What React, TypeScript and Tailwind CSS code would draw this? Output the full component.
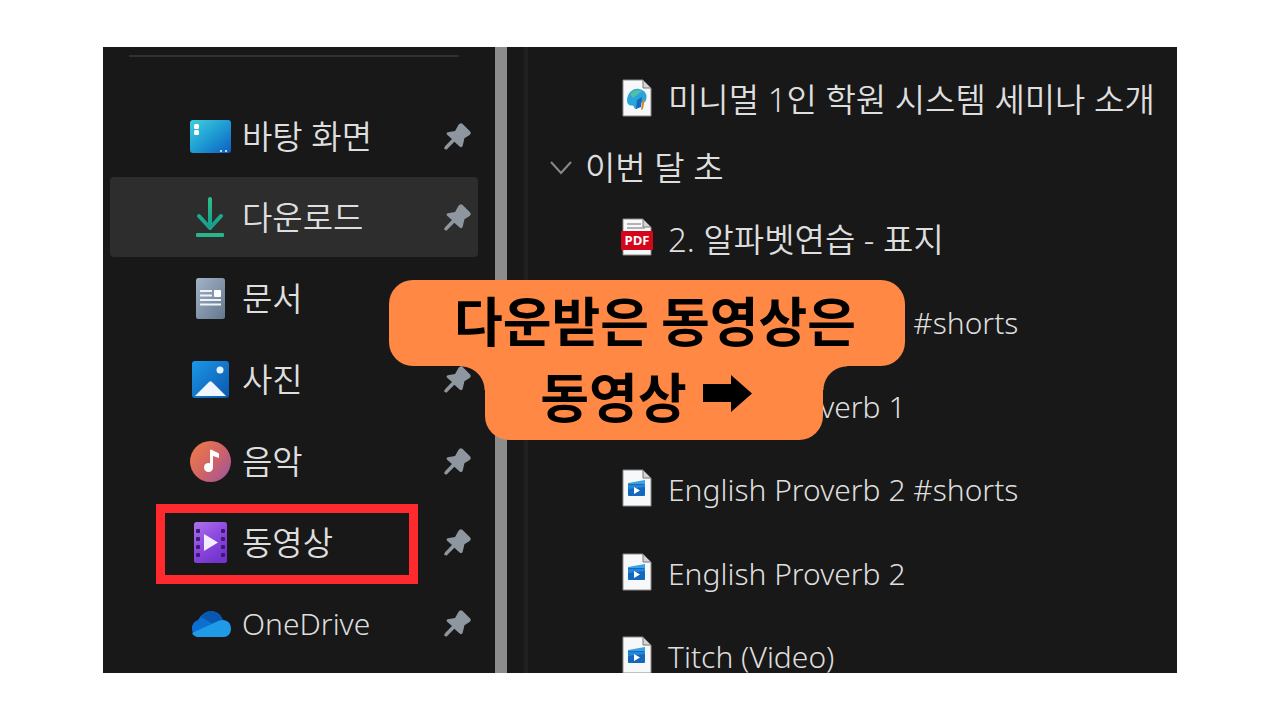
import type { ReactNode } from "react";
import { clsx } from "clsx";

type Place = {
  label: string;
  icon: ReactNode;
  latin?: boolean;
  selected?: boolean;
  marked?: boolean;
};

type FileItem = {
  name: string;
  icon: ReactNode;
  latin?: boolean;
};

function DesktopIcon() {
  return (
    <svg viewBox="0 0 41 33" className="w-[41px] h-[33px] shrink-0">
      <defs>
        <linearGradient id="desk" x1="0" y1="0" x2="1" y2="1">
          <stop offset="0" stopColor="#3fd0dc" />
          <stop offset="0.5" stopColor="#1f9cd4" />
          <stop offset="1" stopColor="#0b5fc0" />
        </linearGradient>
      </defs>
      <rect width="41" height="33" rx="3" fill="url(#desk)" />
      <rect x="4" y="4" width="5" height="5" rx="1.5" fill="#fff" />
      <rect x="4" y="10" width="5" height="5" rx="1.5" fill="#fff" />
      <rect x="30" y="30" width="2" height="2" fill="#b9dcf5" />
      <rect x="35" y="30" width="2" height="2" fill="#b9dcf5" />
    </svg>
  );
}

function DownloadIcon() {
  return (
    <svg viewBox="0 0 30 41" className="w-[30px] h-[41px]" fill="none">
      <defs>
        <linearGradient id="down" x1="0" y1="0" x2="0" y2="41" gradientUnits="userSpaceOnUse">
          <stop offset="0" stopColor="#2fc08c" />
          <stop offset="0.7" stopColor="#15a08c" />
          <stop offset="1" stopColor="#2bb58c" />
        </linearGradient>
      </defs>
      <path d="M15 2V29M4 19L15 31L26 19" stroke="url(#down)" strokeWidth="4" strokeLinecap="round" strokeLinejoin="round" />
      <rect x="1" y="36" width="28" height="4" rx="1" fill="#27b58b" />
    </svg>
  );
}

function DocumentIcon() {
  return (
    <svg viewBox="0 0 29 41" className="w-[29px] h-[41px]">
      <defs>
        <linearGradient id="doc" x1="0" y1="0" x2="1" y2="1">
          <stop offset="0" stopColor="#a3b3c6" />
          <stop offset="1" stopColor="#65788f" />
        </linearGradient>
      </defs>
      <rect width="29" height="41" rx="2.5" fill="url(#doc)" />
      <path d="M4 13H16M4 17.5H16M4 22H25M4 26.5H25" stroke="#eef3f9" strokeWidth="2" />
      <rect x="18" y="12" width="7" height="7" rx="1" fill="#fff" />
    </svg>
  );
}

function PictureIcon() {
  return (
    <svg viewBox="0 0 37 37" className="w-[37px] h-[37px]">
      <defs>
        <linearGradient id="pic" x1="0" y1="0" x2="1" y2="1">
          <stop offset="0" stopColor="#1d97e8" />
          <stop offset="1" stopColor="#0a57ac" />
        </linearGradient>
      </defs>
      <rect width="37" height="37" rx="3" fill="url(#pic)" />
      <path d="M3 35L17 21Q18.500 19.500 20 21L34 35Z" fill="#f0f6fd" />
      <circle cx="28" cy="9" r="3.500" fill="#e6f3fd" />
    </svg>
  );
}

function MusicIcon() {
  return (
    <svg viewBox="0 0 41 41" className="w-[41px] h-[41px] shrink-0">
      <defs>
        <linearGradient id="music" x1="0" y1="0.1" x2="1" y2="0.9">
          <stop offset="0" stopColor="#ee7b49" />
          <stop offset="0.55" stopColor="#cf6267" />
          <stop offset="1" stopColor="#9a579f" />
        </linearGradient>
      </defs>
      <circle cx="20.500" cy="20.500" r="20.500" fill="url(#music)" />
      <circle cx="18.500" cy="26.500" r="4.500" fill="#fff" />
      <path d="M20 27V9.500Q20.500 8 22 9L29 12.500V17L23 15V27Z" fill="#fff" />
    </svg>
  );
}

function VideoIcon() {
  return (
    <svg viewBox="0 0 33 41" className="w-[33px] h-[41px]">
      <defs>
        <linearGradient id="video" x1="0" y1="0" x2="0.6" y2="1">
          <stop offset="0" stopColor="#ac73ea" />
          <stop offset="0.5" stopColor="#8f4be2" />
          <stop offset="1" stopColor="#7434cc" />
        </linearGradient>
      </defs>
      <rect width="33" height="41" rx="2.500" fill="url(#video)" />
      {[7, 15, 23, 31].map((y) => (
        <g key={y} fill="#3f1a75">
          <rect x="2" y={y} width="4" height="4" rx="1" />
          <rect x="27" y={y} width="4" height="4" rx="1" />
        </g>
      ))}
      <path d="M10 12L24 20.500L10 29Z" fill="#f3ecfb" />
    </svg>
  );
}

function CloudIcon() {
  return (
    <svg viewBox="0 0 41 26" className="w-[41px] h-[26px] shrink-0">
      <path d="M8 26A9 9 0 0 1 8 9Q13 0 22 0Q30 1 33 9Q41 10 41 18Q40 26 33 26Z" fill="#0b6fd0" />
      <path d="M11 6Q15 0 22 0Q30 1 33 9L25 14Z" fill="#0a57b0" />
      <path d="M2 22L26 11Q29 9 33 9Q41 10 41 18Q40 26 33 26H8Q4 26 2 22Z" fill="#1f9ae6" />
    </svg>
  );
}

function PinIcon() {
  return (
    <svg viewBox="0 0 78 78" className="w-[27px] h-[27px] shrink-0" fill="#8e979f">
      <path d="M53 2L75 24Q80 30 74 35L59 44L54 66Q51 73 45 68L30 54L7 77L0 74L3 67L23 46L9 34Q5 29 11 27L32 23L42 5Q47 -2 53 2Z" />
    </svg>
  );
}

function Sheet({ children }: { children: ReactNode }) {
  return (
    <svg viewBox="0 0 32 38" className="w-8 h-[38px]">
      <path d="M2 1H22L30 9V37H2Z" fill="#f7f8f9" stroke="#8b8b8b" />
      <path d="M22 1V9H30Z" fill="#d2d4d6" stroke="#777" />
      {children}
    </svg>
  );
}

function ImageFileIcon() {
  return (
    <Sheet>
      <path d="M6 22C6 14 12 9 18 10C24 11 27 16 25 21C24 25 20 22 19 25C18 29 14 32 13 28C13 25 7 29 6 22Z" fill="#2aa5dc" />
      <path d="M9 15Q15 9 21 12L12 19Z" fill="#4fc0a0" />
      <path d="M16 21L21 18L20 28L15 30Z" fill="#1668bd" />
      <path d="M21 23L24 19L22 30L20 31Z" fill="#c98a3c" />
    </Sheet>
  );
}

function PdfFileIcon() {
  return (
    <Sheet>
      <path d="M6 6H20M6 10H24" stroke="#9a9a9a" strokeWidth="1.500" />
      <rect y="13" width="32" height="19" rx="1" fill="#d4061c" />
      <text x="16" y="27" textAnchor="middle" fill="#fff" fontSize="13" fontWeight="700" fontFamily="Open Sans, sans-serif">
        PDF
      </text>
    </Sheet>
  );
}

function VideoFileIcon() {
  return (
    <Sheet>
      <path d="M7 14L24 11V15L7 18Z" fill="#3ba3e4" />
      <rect x="7" y="15" width="17" height="12" rx="1" fill="#1467bd" />
      <path d="M7 16H24V18L7 20Z" fill="#2387d6" />
      <path d="M13 18L19 21.500L13 25Z" fill="#fff" />
    </Sheet>
  );
}

const places: Place[] = [
  { label: "바탕 화면", icon: <DesktopIcon /> },
  { label: "다운로드", icon: <DownloadIcon />, selected: true },
  { label: "문서", icon: <DocumentIcon /> },
  { label: "사진", icon: <PictureIcon /> },
  { label: "음악", icon: <MusicIcon /> },
  { label: "동영상", icon: <VideoIcon />, marked: true },
  { label: "OneDrive", icon: <CloudIcon />, latin: true },
];

const recent: FileItem[] = [{ name: "미니멀 1인 학원 시스템 세미나 소개", icon: <ImageFileIcon /> }];

const thisMonth: FileItem[] = [
  { name: "2. 알파벳연습 - 표지", icon: <PdfFileIcon /> },
  { name: "English Proverb 1 #shorts", icon: <VideoFileIcon />, latin: true },
  { name: "English Proverb 1", icon: <VideoFileIcon />, latin: true },
  { name: "English Proverb 2 #shorts", icon: <VideoFileIcon />, latin: true },
  { name: "English Proverb 2", icon: <VideoFileIcon />, latin: true },
  { name: "Titch (Video)", icon: <VideoFileIcon />, latin: true },
];

const labelSize = (latin?: boolean) => (latin ? "text-[30px]" : "text-[33px]");

function PlaceRow({ place }: { place: Place }) {
  return (
    <li className="relative">
      <a
        href="#"
        className={clsx(
          "flex h-20 items-center gap-3 rounded pl-20 pr-[7px]",
          place.selected && "bg-[#2d2d2d]"
        )}
      >
        <span className="flex w-10 shrink-0 justify-center">{place.icon}</span>
        <span className={clsx("flex-1 whitespace-nowrap leading-none", labelSize(place.latin))}>{place.label}</span>
        <PinIcon />
      </a>
      {place.marked && (
        <span className="pointer-events-none absolute left-[46px] top-px h-20 w-[262px] border-[9px] border-[#ff2a2d]" />
      )}
    </li>
  );
}

function FileRow({ file }: { file: FileItem }) {
  return (
    <button type="button" className="flex min-h-20 flex-1 items-center gap-[15px] pl-[93px] text-left">
      <span className="shrink-0">{file.icon}</span>
      <span className={clsx("whitespace-nowrap pt-1 leading-none", labelSize(file.latin))}>{file.name}</span>
    </button>
  );
}

function Callout() {
  return (
    <div className="absolute left-[286px] top-[233px] flex w-[516px] flex-col items-center font-['Noto_Sans_CJK_KR',sans-serif] text-[53px] font-bold leading-none text-black">
      <p className="flex h-[86px] w-full items-center justify-center rounded-3xl bg-[#ff8845] pb-2 pl-4">
        다운받은 동영상은
      </p>
      <div className="relative ml-3.5 flex h-[74px] w-[338px] items-center justify-center gap-4 rounded-b-3xl bg-[#ff8845] pb-4 pr-4">
        <span className="absolute right-full top-0 size-6 bg-[radial-gradient(circle_at_bottom_left,transparent_23px,#ff8845_24px)]" />
        <span className="absolute left-full top-0 size-6 bg-[radial-gradient(circle_at_bottom_right,transparent_23px,#ff8845_24px)]" />
        <p>동영상</p>
        <svg viewBox="0 0 49 37" className="mb-1 w-[49px] h-[37px]">
          <path d="M0 9H28V0L49 18.500L28 37V27H0Z" />
        </svg>
      </div>
    </div>
  );
}

export default function App() {
  return (
    <main className="flex min-h-screen bg-white px-[103px] py-[47px]">
      <div className="relative flex flex-1 overflow-hidden bg-[#181818] font-['Noto_Sans','Noto_Sans_CJK_KR',sans-serif] font-[350] text-[#dedede]">
        <nav className="flex w-[392px] shrink-0 flex-col pb-[9px] pl-[7px] pr-[17px] pt-2">
          <hr className="mx-[19px] border-t-2 border-[#303030]" />
          <ul className="mt-[39px] flex flex-1 flex-col justify-between">
            {places.map((place) => (
              <PlaceRow key={place.label} place={place} />
            ))}
          </ul>
        </nav>

        <div className="w-3 shrink-0 bg-[#8c8c8c]" />
        <div className="ml-[17px] w-1 shrink-0 bg-[#202020]" />

        <section className="-mb-6 flex flex-1 flex-col pt-[9px]">
          {recent.map((file) => (
            <FileRow key={file.name} file={file} />
          ))}
          <button type="button" className="flex h-14 items-center gap-3 pl-[21px] text-left text-[33px] leading-none">
            <svg viewBox="0 0 24 14" className="w-6 h-3.5" fill="none" stroke="#8a8a8a" strokeWidth="2">
              <path d="M2 1L12 12L22 1" />
            </svg>
            이번 달 초
          </button>
          {thisMonth.map((file) => (
            <FileRow key={file.name} file={file} />
          ))}
        </section>

        <Callout />
      </div>
    </main>
  );
}
